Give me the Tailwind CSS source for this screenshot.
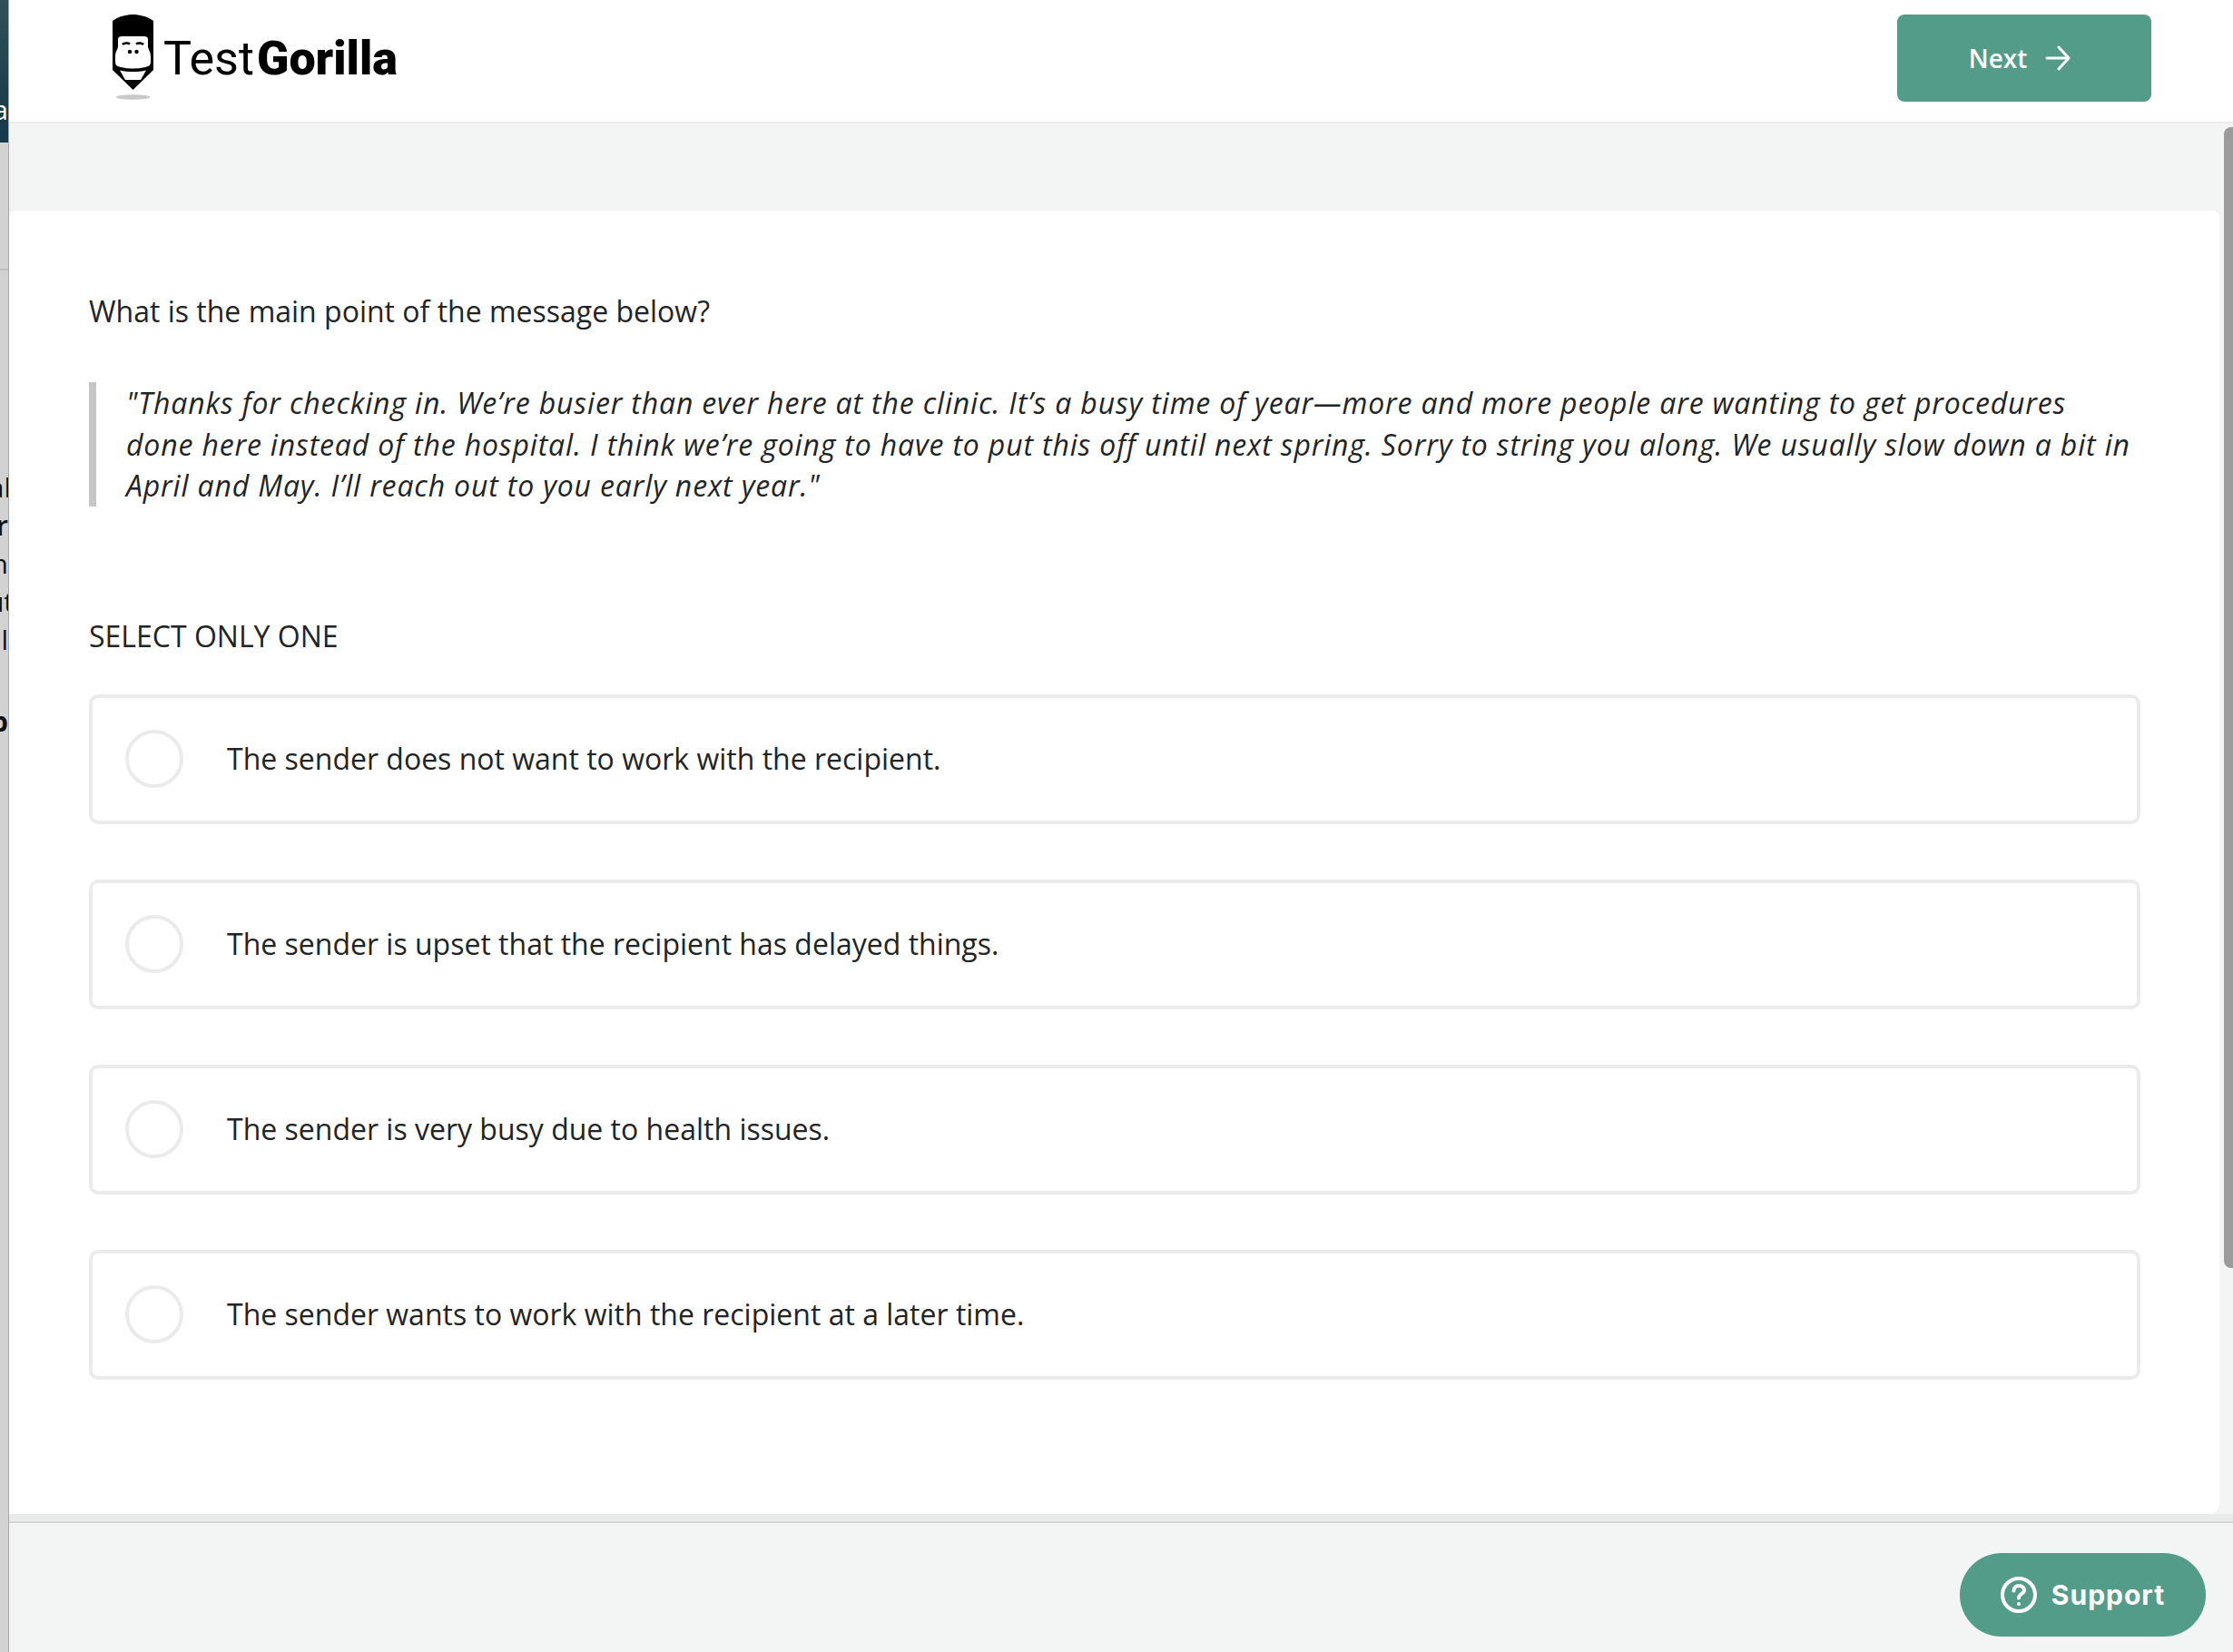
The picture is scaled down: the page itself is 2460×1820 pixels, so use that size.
<!DOCTYPE html>
<html>
<head>
<meta charset="utf-8">
<title>TestGorilla</title>
<script src="https://cdn.jsdelivr.net/npm/@tailwindcss/browser@4"></script>
</head>
<body class="bg-[#f3f5f4] font-['Open_Sans',sans-serif] text-[#1f2526]">
<div class="flex h-[1820px] w-[2460px] overflow-hidden">

    <!-- window behind -->
    <div class="w-[10px] shrink-0 flex flex-col bg-[#d2d2d2] border-r border-[#a8a8a8] overflow-hidden text-[30px] leading-[42px] text-[#111]">
        <div class="h-[157px] shrink-0 bg-gradient-to-b from-[#2f5058] to-[#15394a] pt-[100px] text-white whitespace-nowrap flex justify-end">
            <span>a</span>
        </div>
        <div class="h-[141px] shrink-0 border-b-2 border-[#bdbdbd]"></div>
        <div class="pt-[218px] flex flex-col items-end whitespace-nowrap">
            <span class="-mr-[3px]">al</span>
            <span class="font-semibold">r</span>
            <span>n</span>
            <span class="-mr-[6px]">ut</span>
            <span>l</span>
            <span class="mt-[48px] font-bold">p</span>
        </div>
    </div>

    <div class="flex-1 flex flex-col min-w-0">
        <!-- header -->
        <header class="h-[136px] shrink-0 bg-white border-b-2 border-[#eceeed] flex items-start justify-between pl-[113px] pr-[90px]">
            <div class="flex items-start pt-[16px]">
                <svg width="48" height="96" viewBox="0 0 48 96" class="shrink-0">
                    <path d="M1 7 C8 2 16 0 23.500 0 C31 0 39 2 46 7 V61 L23.500 83 L1 61 Z" fill="#000"/>
                    <path d="M7 27 C7 25 9 24 11 24 H36 C38 24 40 25 40 27 V35 C40 38 43 41 43 46 V52 C43 56 41 57 37 58 C28 60 19 60 10 58 C6 57 4 56 4 52 V46 C4 41 7 38 7 35 Z" fill="#fff"/>
                    <path d="M12 33 C14 31 18 31 20 32.500 M27 32.500 C29 31 33 31 35 33" stroke="#000" stroke-width="2.500" fill="none"/>
                    <circle cx="20" cy="41" r="2.200" fill="#000"/>
                    <circle cx="27.500" cy="41" r="2.200" fill="#000"/>
                    <path d="M9 61.500 C18 63.500 29 63.500 38 61.500 L32 72 H15 Z" fill="#fff"/>
                    <ellipse cx="23.500" cy="91" rx="19" ry="2.800" fill="#c9c9c9"/>
                </svg>
                <div class="ml-[9px] mt-[19px] text-[52px] leading-[60px] text-black font-['Roboto',sans-serif]">
                    <span class="font-normal">Test</span><span class="font-black ml-[3px]">Gorilla</span>
                </div>
            </div>
            <button class="mt-[16px] w-[280px] h-[96px] bg-[#539c8a] rounded-[8px] text-white text-[28px] font-semibold flex items-center justify-center gap-[20px] pr-[10px]">
                <span>Next</span>
                <svg width="28" height="28" viewBox="0 0 28 28" fill="none" stroke="#fff" stroke-width="3" stroke-linecap="round" stroke-linejoin="round">
                    <path d="M2 14 H26 M15 2 L26 14 L15 26"/>
                </svg>
            </button>
        </header>

        <div class="h-[96px] shrink-0"></div>

        <!-- question card -->
        <div class="flex gap-[5px] h-[1436px] shrink-0">
            <main class="w-[2435px] bg-white rounded-t-[8px] rounded-br-[12px] pl-[88px] pr-[87px] pt-[84px]">
                <p class="text-[32px] leading-[54px]">What is the main point of the message below?</p>
                <blockquote class="mt-[51px] pl-[33px] border-l-[8px] border-[#c6c6c6] text-[32px] leading-[45.500px] italic tracking-[0.840px] whitespace-nowrap">
                    "Thanks for checking in. We’re busier than ever here at the clinic. It’s a busy time of year—more and more people are wanting to get procedures<br>
                    done here instead of the hospital. I think we’re going to have to put this off until next spring. Sorry to string you along. We usually slow down a bit in<br>
                    April and May. I’ll reach out to you early next year."
                </blockquote>
                <p class="mt-[121px] text-[32px] leading-[44px]">SELECT ONLY ONE</p>
                <div class="mt-[42px] flex flex-col gap-[61px]">
                    <label class="h-[143px] border-4 border-[#ebebeb] rounded-[10px] flex items-center pl-[36px] gap-[48px] text-[32px]">
                        <span class="w-[64px] h-[64px] rounded-full border-4 border-[#ebebeb]"></span>
                        <span>The sender does not want to work with the recipient.</span>
                    </label>
                    <label class="h-[143px] border-4 border-[#ebebeb] rounded-[10px] flex items-center pl-[36px] gap-[48px] text-[32px]">
                        <span class="w-[64px] h-[64px] rounded-full border-4 border-[#ebebeb]"></span>
                        <span>The sender is upset that the recipient has delayed things.</span>
                    </label>
                    <label class="h-[143px] border-4 border-[#ebebeb] rounded-[10px] flex items-center pl-[36px] gap-[48px] text-[32px]">
                        <span class="w-[64px] h-[64px] rounded-full border-4 border-[#ebebeb]"></span>
                        <span>The sender is very busy due to health issues.</span>
                    </label>
                    <label class="h-[143px] border-4 border-[#ebebeb] rounded-[10px] flex items-center pl-[36px] gap-[48px] text-[32px]">
                        <span class="w-[64px] h-[64px] rounded-full border-4 border-[#ebebeb]"></span>
                        <span>The sender wants to work with the recipient at a later time.</span>
                    </label>
                </div>
            </main>
            <div class="w-[10px] h-[1257px] -mt-[92px] bg-[#9b9b9b] rounded-l-[8px]"></div>
        </div>

        <!-- footer -->
        <div class="h-[8px] shrink-0 bg-[#e9ebea]"></div>
        <footer class="flex-1 border-t-2 border-[#d5d7d6] flex justify-end items-start pr-[30px] pt-[33px]">
            <button class="w-[271px] h-[92px] rounded-full bg-[#539c8a] text-white flex items-center justify-center gap-[16px] font-['Inter',sans-serif] font-bold text-[30px] tracking-[1px]">
                <svg width="40" height="40" viewBox="0 0 40 40" fill="none" stroke="#fff" stroke-width="4" stroke-linecap="round">
                    <circle cx="20" cy="20" r="18"/>
                    <path d="M14.500 15.500 C14.500 12 17 10 20 10 C24 10 26 12.500 26 15 C26 19 20 19 20 23.500"/>
                    <circle cx="20" cy="30" r="1" fill="#fff" stroke-width="2"/>
                </svg>
                <span>Support</span>
            </button>
        </footer>
    </div>
</div>
</body>
</html>
